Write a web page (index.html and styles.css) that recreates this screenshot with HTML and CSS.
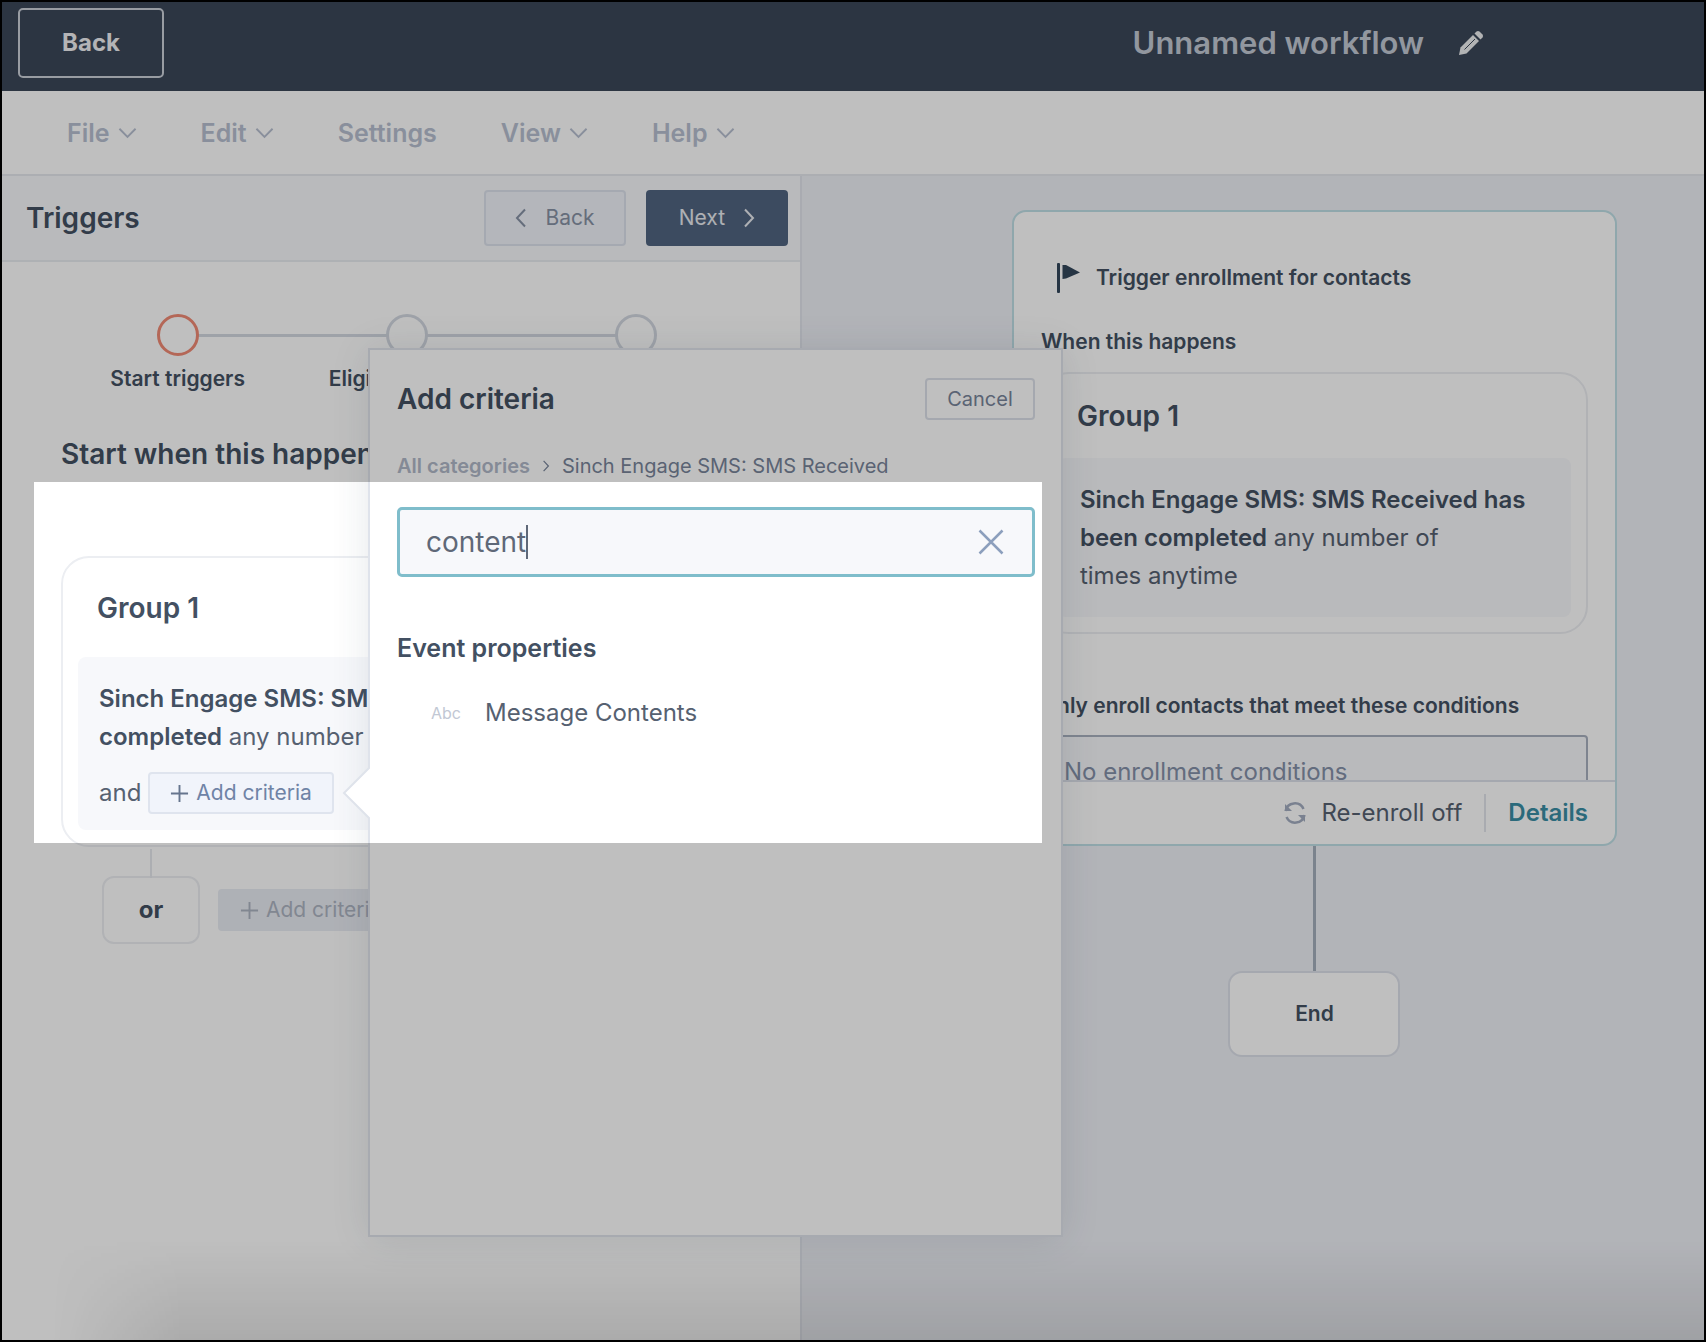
FILE: index.html
```html
<!DOCTYPE html>
<html lang="en">

<head>
    <meta charset="UTF-8">
    <meta name="viewport" content="width=device-width, initial-scale=1.0">
    <title>Unnamed workflow</title>
    <link rel="stylesheet" href="styles.css">
</head>

<body>
    <div class="app">
        <header class="topbar">
            <button type="button" class="topbar-back">Back</button>
            <div class="workflow-name">
                <h1>Unnamed workflow</h1>
                <button type="button" class="icon-button" aria-label="Rename workflow">
                    <svg width="26" height="26" viewBox="0 0 26 26" fill="currentColor">
                        <path d="M1 25 L2.500 17.500 L15 5 L21 11 L8.500 23.500 Z" />
                        <path d="M16.500 3.500 L18.500 1.500 Q20 0.300 21.500 1.500 L24.500 4.500 Q25.700 6 24.500 7.500 L22.500 9.500 Z" />
                        <path d="M6.500 19.500 L17 9" stroke="#3b4759" stroke-width="1" fill="none" />
                    </svg>
                </button>
            </div>
        </header>

        <nav class="menu">
            <button type="button">File <svg class="caret" viewBox="0 0 20 12"><path d="M1.500 1.500 L10 10 L18.500 1.500" /></svg></button>
            <button type="button">Edit <svg class="caret" viewBox="0 0 20 12"><path d="M1.500 1.500 L10 10 L18.500 1.500" /></svg></button>
            <button type="button">Settings</button>
            <button type="button">View <svg class="caret" viewBox="0 0 20 12"><path d="M1.500 1.500 L10 10 L18.500 1.500" /></svg></button>
            <button type="button">Help <svg class="caret" viewBox="0 0 20 12"><path d="M1.500 1.500 L10 10 L18.500 1.500" /></svg></button>
        </nav>

        <main class="editor">
            <section class="panel">
                <div class="panel-head">
                    <h2>Triggers</h2>
                    <button type="button" class="step-button">
                        <svg class="arrow" viewBox="0 0 12 20"><path d="M10 1.500 L2 10 L10 18.500" /></svg>
                        Back
                    </button>
                    <button type="button" class="step-button step-next">
                        Next
                        <svg class="arrow" viewBox="0 0 12 20"><path d="M2 1.500 L10 10 L2 18.500" /></svg>
                    </button>
                </div>

                <ol class="steps">
                    <li class="step current"><span class="dot"></span>Start triggers</li>
                    <li class="step"><span class="dot"></span>Eligible records</li>
                    <li class="step"><span class="dot"></span>Settings</li>
                </ol>

                <h2 class="section-title">Start when this happens</h2>

                <div class="group">
                    <h3>Group 1</h3>
                    <div class="filter">
                        <p><b>Sinch Engage SMS: SMS Received has been completed</b> any number of times anytime</p>
                        <div class="filter-add">
                            <span>and</span>
                            <button type="button" class="add-button">
                                <svg class="plus" viewBox="0 0 20 20"><path d="M10 1 V19 M1 10 H19" /></svg>Add criteria
                            </button>
                        </div>
                    </div>
                </div>
                <div class="or-row">
                    <div class="or-box">or</div>
                    <button type="button" class="add-button" disabled>
                        <svg class="plus" viewBox="0 0 20 20"><path d="M10 1 V19 M1 10 H19" /></svg>Add criteria
                    </button>
                </div>
            </section>

            <section class="canvas">
                <div class="flow">
                    <article class="trigger-card">
                        <div class="trigger-body">
                            <h3 class="trigger-title">
                                <svg width="24" height="30" viewBox="0 0 24 30" fill="#33475b">
                                    <rect x="0" y="0" width="3" height="30" rx="1" />
                                    <path d="M5.500 2 L9 2 L23 9.500 L9 15.500 L5.500 16 Z" />
                                </svg>
                                Trigger enrollment for contacts
                            </h3>
                            <h4>When this happens</h4>
                            <div class="group">
                                <h3>Group 1</h3>
                                <div class="filter">
                                    <p><b>Sinch Engage SMS: SMS Received has been completed</b> any number of<br>times anytime</p>
                                </div>
                            </div>
                            <h4>Only enroll contacts that meet these conditions</h4>
                            <div class="conditions">No enrollment conditions</div>
                        </div>
                        <footer class="trigger-foot">
                            <svg width="24" height="24" viewBox="0 0 24 24" fill="none" stroke="#a3adc0" stroke-width="2.500">
                                <path d="M2.500 10 A9.500 9.500 0 0 1 20.500 8" />
                                <path d="M21.500 14 A9.500 9.500 0 0 1 3.500 16" />
                                <path d="M2 3 V10 H9 Z" fill="#a3adc0" stroke="none" />
                                <path d="M22 21 V14 H15 Z" fill="#a3adc0" stroke="none" />
                            </svg>
                            <span>Re-enroll off</span>
                            <a href="#details">Details</a>
                        </footer>
                    </article>
                    <div class="connector"></div>
                    <div class="end-node">End</div>
                </div>
            </section>
        </main>

        <div class="popover" role="dialog" aria-label="Add criteria">
            <svg class="popover-arrow" width="28" height="54" viewBox="0 0 28 54">
                <path d="M28 1 L2 27 L28 53" fill="#fff" stroke="#dfe3eb" stroke-width="2" />
            </svg>
            <div class="popover-head">
                <h2>Add criteria</h2>
                <button type="button" class="cancel">Cancel</button>
            </div>
            <div class="crumbs">
                <a href="#categories">All categories</a>
                <svg class="crumb-arrow" viewBox="0 0 12 20"><path d="M2 1.500 L10 10 L2 18.500" /></svg>
                <span>Sinch Engage SMS: SMS Received</span>
            </div>
            <div class="search">
                <input type="text" value="content" aria-label="Search criteria">
                <span class="text-cursor"></span>
                <button type="button" class="icon-button" aria-label="Clear search">
                    <svg width="26" height="26" viewBox="0 0 26 26" fill="none" stroke="#8c9fbd" stroke-width="2.500">
                        <path d="M1.500 1.500 L24.500 24.500 M24.500 1.500 L1.500 24.500" />
                    </svg>
                </button>
            </div>
            <h3>Event properties</h3>
            <button type="button" class="property"><small>Abc</small>Message Contents</button>
        </div>

        <div class="dock-shade"></div>
        <div class="spotlight"></div>
    </div>
</body>

</html>
```
FILE: styles.css
```css
* {
    box-sizing: border-box;
}

body {
    margin: 0;
    font-family: Inter, "Liberation Sans", sans-serif;
    font-size: 24px;
    line-height: 38px;
    color: #566171;
}

h1,
h2,
h3,
h4,
p,
ol {
    margin: 0;
    padding: 0;
}

h2,
h3,
h4,
b {
    font-weight: 600;
    color: #435062;
}

h2,
h3 {
    font-size: 28px;
}

h4 {
    font-size: 21px;
}

button {
    font: inherit;
    color: inherit;
    background: none;
    border: none;
    padding: 0;
    cursor: pointer;
}

svg {
    display: block;
    flex: none;
}

.app {
    position: relative;
    display: flex;
    flex-direction: column;
    min-height: 100vh;
    border: 2px solid #000;
    overflow: hidden;
    background: #fff;
}

/* top bar */
.topbar {
    display: flex;
    align-items: center;
    height: 89px;
    padding: 0 220px 8px 16px;
    background: #3b4759;
}

.topbar-back {
    width: 146px;
    height: 70px;
    border: 2px solid #cbd0d8;
    border-radius: 5px;
    color: #f0f1f3;
    font-size: 24px;
    font-weight: 700;
}

.workflow-name {
    display: flex;
    align-items: center;
    gap: 34px;
    margin-left: auto;
    color: #eeeff1;
}

.workflow-name h1 {
    font-size: 31px;
    font-weight: 600;
    color: #c3cad5;
}

.menu {
    display: flex;
    align-items: center;
    gap: 64px;
    height: 85px;
    padding: 0 65px;
    border-bottom: 2px solid #e6e8ee;
    color: #b7bfd0;
    font-size: 25px;
    font-weight: 600;
}

.menu button {
    display: flex;
    align-items: center;
    gap: 8px;
}

.caret,
.arrow,
.plus,
.crumb-arrow {
    fill: none;
    stroke: currentColor;
    stroke-width: 2;
}

.caret {
    width: 19px;
    height: 12px;
}

.arrow {
    width: 12px;
    height: 20px;
}

.crumb-arrow {
    width: 8px;
    height: 12px;
}

.plus {
    width: 19px;
    height: 19px;
}

.editor {
    display: flex;
    flex: 1;
}

/* left panel */
.panel {
    flex: 0 0 47%;
    border-right: 2px solid #e2e5ed;
}

.panel-head {
    display: flex;
    align-items: center;
    gap: 20px;
    height: 86px;
    padding: 0 12px 0 24px;
    background: #f7f8fb;
    border-bottom: 2px solid #e9ecf1;
}

.panel-head h2 {
    margin-right: auto;
}

.step-button {
    display: flex;
    align-items: center;
    justify-content: center;
    gap: 18px;
    width: 142px;
    height: 56px;
    border: 2px solid #dde2ec;
    border-radius: 4px;
    background: #f0f3fa;
    color: #8792a5;
    font-size: 21px;
}

.step-next {
    background: #516580;
    border-color: #516580;
    color: #e8ebf0;
}

.steps {
    display: flex;
    padding: 52px 49px 0 61px;
    list-style: none;
}

.step {
    position: relative;
    display: flex;
    flex: 1;
    flex-direction: column;
    align-items: center;
    gap: 4px;
    color: #435062;
    font-size: 21px;
    font-weight: 600;
    white-space: nowrap;
}

.dot {
    z-index: 1;
    width: 42px;
    height: 42px;
    border: 3px solid #d3d8e1;
    border-radius: 50%;
    background: #fff;
}

.current .dot {
    border-color: #f08a74;
}

.step + .step::before {
    content: "";
    position: absolute;
    top: 20px;
    right: 50%;
    width: 100%;
    height: 3px;
    background: #d3d8e1;
}

.section-title {
    padding: 37px 59px 0;
}

.group {
    padding: 31px 15px 15px;
    border: 2px solid #eceef2;
    border-radius: 28px;
}

.group h3 {
    padding: 0 19px;
}

.filter {
    margin-top: 30px;
    padding: 23px 21px 16px;
    border-radius: 8px;
    background: #f7f8fb;
}

.panel .group {
    margin: 83px 59px 0;
}

.filter-add {
    display: flex;
    align-items: center;
    gap: 7px;
    margin-top: 16px;
}

.add-button {
    display: flex;
    align-items: center;
    gap: 7px;
    height: 42px;
    padding: 0 20px;
    border: 2px solid #dfe4ee;
    border-radius: 4px;
    background: #f1f4fb;
    color: #6f83a6;
    font-size: 21px;
}

.add-button .plus {
    color: #66758e;
}

.add-button:disabled,
.add-button:disabled .plus {
    border-color: #e9ecf3;
    background: #e9ecf3;
    color: #adb4c2;
}

.or-row {
    display: flex;
    align-items: center;
    gap: 18px;
    padding: 29px 59px 0 100px;
}

.or-box {
    position: relative;
    width: 98px;
    padding: 13px 0;
    border: 2px solid #eceef2;
    border-radius: 12px;
    color: #435062;
    font-weight: 700;
    text-align: center;
}

.or-box::before {
    content: "";
    position: absolute;
    bottom: 100%;
    left: 46px;
    width: 2px;
    height: 29px;
    background: #e6e8ee;
}

/* canvas */
.canvas {
    flex: 1;
    padding: 34px 87px 0 210px;
    background: #eef0f6;
}

.flow {
    display: flex;
    flex-direction: column;
    align-items: center;
}

.trigger-card {
    align-self: stretch;
    border: 2px solid #bfdfe6;
    border-radius: 14px;
    background: #fff;
    overflow: hidden;
}

.trigger-body {
    height: 568px;
    padding: 47px 27px 0;
    overflow: hidden;
}

.trigger-title {
    display: flex;
    align-items: center;
    gap: 15px;
    padding: 0 16px;
    font-size: 21px;
}

.trigger-body h4 {
    margin-top: 26px;
}

.trigger-body .group {
    margin: 11px 0 53px;
    padding-top: 23px;
}

.trigger-body .filter {
    margin-top: 23px;
    padding: 23px 22px 22px;
}

.conditions {
    margin-top: 10px;
    padding: 16px 21px;
    border: 2px solid #a9b1bf;
    border-radius: 4px;
    background: #f7f8fb;
    color: #8490a8;
}

.trigger-foot {
    display: flex;
    align-items: center;
    justify-content: flex-end;
    gap: 14px;
    height: 64px;
    padding: 0 27px;
    border-top: 2px solid #dde1ea;
}

.trigger-foot a {
    margin-left: 8px;
    padding-left: 22px;
    border-left: 2px solid #e2e5eb;
    color: #3a8ea5;
    font-weight: 600;
    text-decoration: none;
}

.connector {
    width: 3px;
    height: 125px;
    background: #a5afbd;
}

.end-node {
    width: 172px;
    padding: 22px 0;
    border: 2px solid #dde1ea;
    border-radius: 14px;
    background: #fff;
    color: #435062;
    font-size: 21px;
    font-weight: 600;
    text-align: center;
}

/* criteria popover, floats over both columns */
.popover {
    position: absolute;
    top: 346px;
    left: 366px;
    z-index: 2;
    width: 695px;
    height: 889px;
    padding: 28px 26px 28px 27px;
    border: 2px solid #dfe3eb;
    background: #fff;
    box-shadow: 0 2px 36px rgba(45, 62, 80, 0.12);
}

.popover-arrow {
    position: absolute;
    top: 416px;
    left: -28px;
}

.popover-head {
    display: flex;
    align-items: center;
    justify-content: space-between;
}

.cancel {
    width: 110px;
    height: 42px;
    border: 2px solid #dde1ea;
    border-radius: 4px;
    color: #78849a;
    font-size: 20px;
}

.crumbs {
    display: flex;
    align-items: center;
    gap: 12px;
    margin-top: 27px;
    color: #78849a;
    font-size: 20px;
}

.crumbs a {
    color: #b1b8c8;
    font-weight: 600;
    text-decoration: none;
}

.search {
    display: flex;
    align-items: center;
    height: 70px;
    margin-top: 22px;
    padding: 0 28px 0 26px;
    border: 3px solid #7fbdcb;
    border-radius: 5px;
    background: #f7f8fb;
}

.search input {
    field-sizing: content;
    min-width: 0;
    padding: 0;
    border: none;
    outline: none;
    background: none;
    color: #5f6878;
    font: inherit;
    font-size: 28px;
}

.text-cursor {
    width: 2px;
    height: 34px;
    background: #5f6878;
}

.search .icon-button {
    margin-left: auto;
}

.popover h3 {
    margin-top: 52px;
    font-size: 25px;
}

.property {
    display: flex;
    align-items: center;
    gap: 24px;
    margin-top: 27px;
    padding-left: 34px;
}

.property small {
    color: #c2c8d4;
    font-size: 16px;
}

/* soft shade along the bottom edge of the window */
.dock-shade {
    position: absolute;
    right: 0;
    bottom: 0;
    left: 0;
    z-index: 3;
    height: 100px;
    background: linear-gradient(transparent, rgba(0, 0, 0, 0.1));
    mask-image: linear-gradient(to right, transparent 50px, #000 180px);
    pointer-events: none;
}

/* dims everything outside the highlighted area */
.spotlight {
    position: absolute;
    top: 480px;
    left: 32px;
    z-index: 4;
    width: 1008px;
    height: 361px;
    box-shadow: 0 0 0 2000px rgba(0, 0, 0, 0.25);
    pointer-events: none;
}
```
